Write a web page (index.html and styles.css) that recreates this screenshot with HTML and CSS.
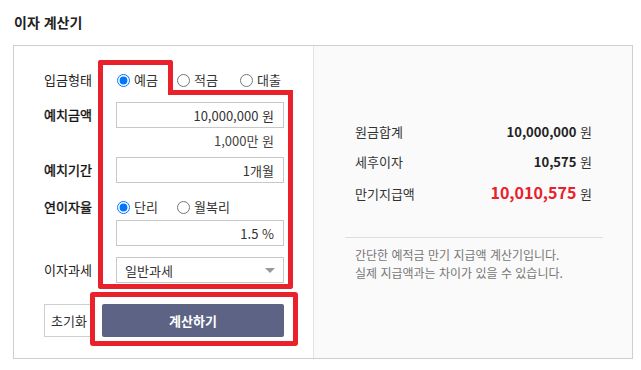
FILE: index.html
```html
<!DOCTYPE html>
<html lang="ko">
<head>
<meta charset="utf-8">
<title>이자 계산기</title>
<link rel="stylesheet" href="styles.css">
</head>
<body>
<h1 class="title">이자 계산기</h1>
<div class="calc">
  <div class="form">
    <div class="row row-type">
      <span class="label">입금형태</span>
      <div class="ctrl radios">
        <label class="opt"><input type="radio" name="type" checked><span>예금</span></label>
        <label class="opt opt-wide"><input type="radio" name="type"><span>적금</span></label>
        <label class="opt"><input type="radio" name="type"><span>대출</span></label>
      </div>
    </div>
    <div class="row row-amount">
      <span class="label label-strong">예치금액</span>
      <div class="ctrl">
        <input class="field" type="text" value="10,000,000 원">
        <div class="hint">1,000만 원</div>
      </div>
    </div>
    <div class="row row-period">
      <span class="label label-strong">예치기간</span>
      <div class="ctrl">
        <input class="field" type="text" value="1개월">
      </div>
    </div>
    <div class="row row-rate">
      <span class="label label-short label-strong">연이자율</span>
      <div class="ctrl">
        <div class="radios radios-short">
          <label class="opt"><input type="radio" name="rate" checked><span>단리</span></label>
          <label class="opt"><input type="radio" name="rate"><span>월복리</span></label>
        </div>
        <input class="field field-rate" type="text" value="1.5 %">
      </div>
    </div>
    <div class="row row-tax">
      <span class="label">이자과세</span>
      <div class="ctrl select-wrap">
        <select class="select"><option>일반과세</option></select>
      </div>
    </div>
    <div class="actions">
      <button class="btn-reset" type="button">초기화</button>
      <button class="btn-calc" type="button">계산하기</button>
    </div>
  </div>
  <div class="result">
    <div class="res-row"><span class="res-label">원금합계</span><span class="res-val"><b>10,000,000</b> 원</span></div>
    <div class="res-row"><span class="res-label">세후이자</span><span class="res-val"><b>10,575</b> 원</span></div>
    <div class="res-row"><span class="res-label">만기지급액</span><span class="res-val"><b class="red">10,010,575</b> 원</span></div>
    <div class="divider"></div>
    <p class="note">간단한 예적금 만기 지급액 계산기입니다.<br>실제 지급액과는 차이가 있을 수 있습니다.</p>
  </div>
</div>
<div class="mark mark-1"></div>
<div class="mark mark-2"></div>
<div class="mark mark-3"></div>
</body>
</html>
```
FILE: styles.css
```css
* { box-sizing: border-box; }
html, body { margin: 0; padding: 0; background: #fff; }
body {
  position: relative;
  width: 641px;
  height: 370px;
  overflow: hidden;
  font-family: "Noto Sans CJK KR", "Noto Sans", sans-serif;
  font-size: 13px;
  color: #333;
}
.title {
  margin: 0;
  padding: 12px 0 0 14px;
  font-size: 14px;
  line-height: 20px;
  font-weight: bold;
  color: #222;
}
.calc {
  margin: 13px 0 0 13px;
  width: 620px;
  height: 314px;
  border: 1px solid #cfcfcf;
  display: flex;
}
.form {
  width: 299px;
  flex: none;
  padding: 21px 29px 0 30px;
  background: #fff;
}
.row { display: flex; align-items: flex-start; }
.label {
  width: 72px;
  flex: none;
  height: 26px;
  line-height: 26px;
  color: #222;
}
.label-strong { color: #111; -webkit-text-stroke: 0.4px #111; }
.label-short { height: 20px; line-height: 20px; }
.ctrl { width: 168px; flex: none; }
.radios { display: flex; align-items: center; height: 26px; }
.radios-short { height: 20px; }
.opt {
  display: flex;
  align-items: center;
  flex: none;
  width: 60px;
  color: #333;
}
.opt-wide { width: 63px; }
.opt:last-child { width: auto; }
.opt input {
  width: 13px;
  height: 13px;
  margin: 0 0 0 1px;
  flex: none;
}
.opt span { margin-left: 4px; line-height: 20px; white-space: nowrap; }
.row-amount { margin-top: 9px; }
.row-period { margin-top: 6px; }
.row-rate { margin-top: 14px; }
.row-tax { margin-top: 11px; }
.field {
  display: block;
  width: 168px;
  height: 26px;
  margin: 0;
  border: 1px solid #c8c8c8;
  padding: 0 9px;
  text-align: right;
  font: inherit;
  font-size: 13px;
  color: #333;
  background: #fff;
  outline: none;
}
.field-rate { margin-top: 3px; }
.hint {
  margin-top: 3px;
  line-height: 20px;
  text-align: right;
  padding-right: 10px;
  color: #444;
}
.select-wrap { position: relative; }
.select {
  display: block;
  width: 168px;
  height: 26px;
  margin: 0;
  border: 1px solid #c8c8c8;
  border-radius: 0;
  padding: 0 8px;
  font: inherit;
  font-size: 13px;
  color: #333;
  background: #fff;
  -webkit-appearance: none;
  appearance: none;
  outline: none;
}
.select-wrap::after {
  content: "";
  position: absolute;
  right: 9px;
  top: 11px;
  border-left: 5px solid transparent;
  border-right: 5px solid transparent;
  border-top: 5px solid #999;
}
.actions {
  margin-top: 21px;
  display: flex;
  gap: 8px;
}
.btn-reset {
  width: 50px;
  height: 33px;
  border: 1px solid #cfcfcf;
  background: #fff;
  font: inherit;
  font-size: 13px;
  color: #333;
  padding: 0;
}
.btn-calc {
  width: 182px;
  height: 33px;
  border: none;
  border-radius: 2px;
  background: #5d6385;
  color: #fff;
  font: inherit;
  font-size: 13px;
  font-weight: bold;
  padding: 0;
}
.result {
  flex: 1;
  background: #fafafa;
  border-left: 1px solid #e4e4e4;
  padding: 71px 40px 0 41px;
}
.res-row {
  display: flex;
  justify-content: space-between;
  align-items: baseline;
  line-height: 30px;
  height: 30px;
  color: #333;
}
.res-val { color: #333; }
.res-val b { color: #222; font-weight: bold; }
.res-val b.red { color: #e8212b; font-size: 16px; }
.divider {
  margin: 30px -11px 0 -10px;
  height: 1px;
  background: #dedede;
}
.note {
  margin: 8px 0 0 0;
  font-size: 12px;
  line-height: 18px;
  color: #777;
}
.mark {
  position: absolute;
  border: 5px solid #e8212b;
  border-radius: 3px;
}
.mark-1 {
  left: 98px;
  top: 60px;
  width: 75px;
  height: 35px;
  border-bottom: none;
  border-radius: 3px 3px 0 0;
}
.mark-2 {
  left: 98px;
  top: 90px;
  width: 195px;
  height: 199px;
  border-top: none;
  border-radius: 0 0 3px 3px;
}
.mark-2::before {
  content: "";
  position: absolute;
  top: 0;
  left: 70px;
  right: -5px;
  height: 5px;
  background: #e8212b;
  border-top-right-radius: 3px;
}
.mark-3 {
  left: 90px;
  top: 292px;
  width: 208px;
  height: 54px;
}
```
